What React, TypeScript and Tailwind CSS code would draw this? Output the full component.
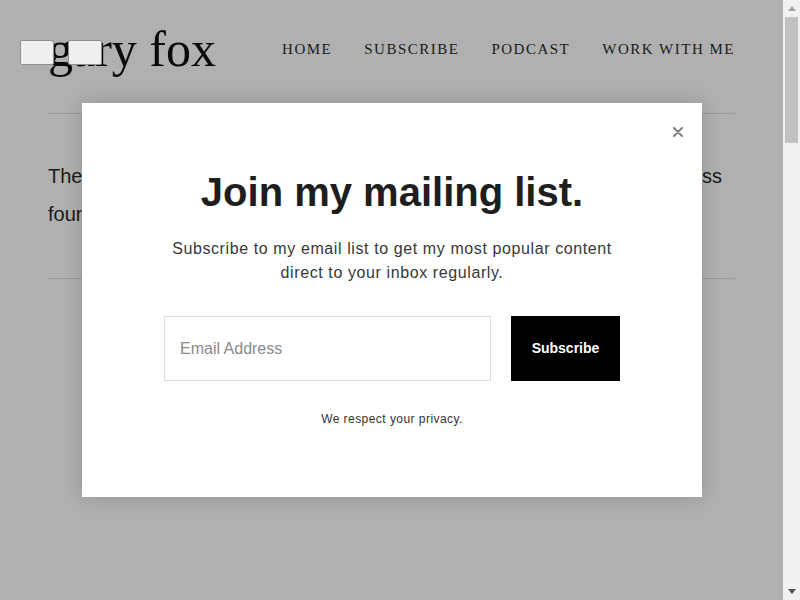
import React from "react";

export default function App() {
  return (
    <div className="flex w-[800px] h-[600px] overflow-hidden">
      <div className="relative w-[783px] h-[600px] bg-[#b0b0b0]">
        <header className="flex justify-between items-start px-[48px] h-[113px]">
          <div className="mt-[24px] text-[50px] leading-[50px] text-[#0a0a0a] font-['Liberation_Serif',serif]">
            gary fox
          </div>
          <nav className="mt-[39px] flex gap-[32px] text-[15px] leading-[20px] tracking-[1.5px] text-[#1a1a1a] font-['Liberation_Serif',serif]">
            <span>HOME</span>
            <span>SUBSCRIBE</span>
            <span>PODCAST</span>
            <span>WORK WITH ME</span>
          </nav>
        </header>
        <div className="mx-[48px] h-px bg-[#9c9c9c]" />
        <div className="mx-[48px] mt-[43px] text-[20px] leading-[38px] text-[#1a1a1a] font-['Liberation_Sans',Arial,sans-serif]">
          <div className="mr-[13px] text-justify [text-align-last:justify]">
            The ultimate resource for entrepreneurs and innovators in digital business
          </div>
          <div>founders, marketers and strategy leaders.</div>
        </div>
        <div className="mx-[48px] mt-[45px] h-px bg-[#9c9c9c]" />

        <button className="absolute left-[20px] top-[40px] w-[34px] h-[25px] rounded-[2px] border border-[#8f8f8f] bg-[#efefef]" />
        <button className="absolute left-[68px] top-[40px] w-[34px] h-[25px] rounded-[2px] border border-[#8f8f8f] bg-[#efefef]" />

        <div className="absolute left-[82px] top-[103px] w-[620px] h-[394px] bg-white shadow-[0_0_18px_rgba(0,0,0,0.18)] font-['Liberation_Sans',Arial,sans-serif]">
          <div className="absolute right-[19px] top-[24px] w-[10px] h-[10px] flex items-center justify-center">
            <svg width="10" height="10" viewBox="0 0 10 10">
              <path d="M1 1L9 9M9 1L1 9" stroke="#808080" strokeWidth="2" strokeLinecap="round" />
            </svg>
          </div>
          <div className="flex flex-col items-center pt-[65px]">
            <h1 className="text-[40px] leading-[48px] font-bold text-[#1e1e1e]">Join my mailing list.</h1>
            <p className="mt-[21px] text-center text-[16px] leading-[24px] tracking-[0.6px] text-[#383838]">
              Subscribe to my email list to get my most popular content
              <br />
              direct to your inbox regularly.
            </p>
            <div className="mt-[31px] flex gap-[20px]">
              <div className="w-[327px] h-[65px] border border-[#dddddd] flex items-center pl-[15px] text-[16px] text-[#8a8a8a]">
                Email Address
              </div>
              <div className="w-[109px] h-[65px] bg-black flex items-center justify-center text-[14px] font-bold text-white">
                Subscribe
              </div>
            </div>
            <p className="mt-[29px] text-[12px] leading-[18px] tracking-[0.45px] text-[#333333]">We respect your privacy.</p>
          </div>
        </div>
      </div>
      <div className="w-[17px] h-[600px] bg-[#f1f1f1] flex flex-col items-center">
        <div className="h-[17px] flex items-center justify-center">
          <svg width="8" height="5" viewBox="0 0 8 5">
            <path d="M0 5L4 0L8 5Z" fill="#a3a3a3" />
          </svg>
        </div>
        <div className="w-[13px] h-[126px] bg-[#c1c1c1]" />
        <div className="flex-1" />
        <div className="h-[17px] flex items-center justify-center">
          <svg width="8" height="5" viewBox="0 0 8 5">
            <path d="M0 0L8 0L4 5Z" fill="#505050" />
          </svg>
        </div>
      </div>
    </div>
  );
}
